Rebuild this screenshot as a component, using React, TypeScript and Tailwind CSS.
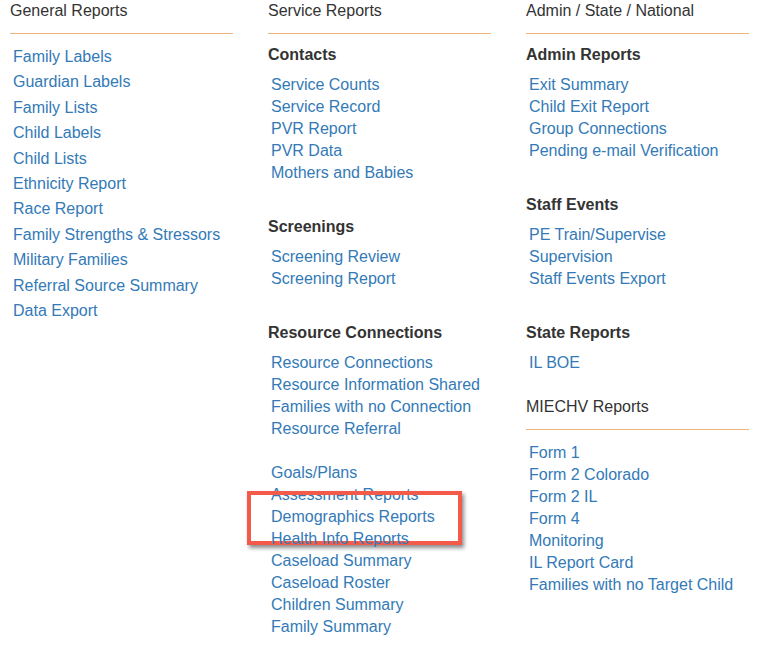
import type { ReactNode } from "react";

const GENERAL = [
  "Family Labels",
  "Guardian Labels",
  "Family Lists",
  "Child Labels",
  "Child Lists",
  "Ethnicity Report",
  "Race Report",
  "Family Strengths & Stressors",
  "Military Families",
  "Referral Source Summary",
  "Data Export",
];

const CONTACTS = ["Service Counts", "Service Record", "PVR Report", "PVR Data", "Mothers and Babies"];
const SCREENINGS = ["Screening Review", "Screening Report"];
const RESOURCES = [
  "Resource Connections",
  "Resource Information Shared",
  "Families with no Connection",
  "Resource Referral",
];
const OTHER = [
  "Goals/Plans",
  "Assessment Reports",
  "Demographics Reports",
  "Health Info Reports",
  "Caseload Summary",
  "Caseload Roster",
  "Children Summary",
  "Family Summary",
];

const ADMIN = ["Exit Summary", "Child Exit Report", "Group Connections", "Pending e-mail Verification"];
const STAFF = ["PE Train/Supervise", "Supervision", "Staff Events Export"];
const STATE = ["IL BOE"];
const MIECHV = [
  "Form 1",
  "Form 2 Colorado",
  "Form 2 IL",
  "Form 4",
  "Monitoring",
  "IL Report Card",
  "Families with no Target Child",
];

function Title({ children, className = "" }: { children: ReactNode; className?: string }) {
  return (
    <>
      <h2 className={`text-[16px] leading-[20px] text-[#333] ${className}`}>{children}</h2>
      <div className="mt-[12px] h-px bg-[#eeb47c]" />
    </>
  );
}

function SubHead({ children, className = "" }: { children: ReactNode; className?: string }) {
  return <h3 className={`text-[16px] font-semibold leading-[22px] text-[#333] ${className}`}>{children}</h3>;
}

function LinkList({ items, className = "", mark }: { items: string[]; className?: string; mark?: string }) {
  return (
    <ul className={`pl-[3px] ${className}`}>
      {items.map((s) => (
        <li key={s} className="relative text-[16px] leading-[22px] text-[#337ab7]">
          <a href="#">{s}</a>
          {mark === s && (
            <span className="absolute -left-[24px] -top-[15px] h-[54px] w-[215px] border-[4px] border-[#f45a4a] shadow-[2px_3px_4px_rgba(0,0,0,0.45)]" />
          )}
        </li>
      ))}
    </ul>
  );
}

export default function App() {
  return (
    <div className="flex min-h-[645px] gap-[35px] bg-white pl-[10px] pt-[1px] font-['Liberation_Sans',Arial,sans-serif]">
      <section className="w-[223px]">
        <Title>General Reports</Title>
        <ul className="mt-[10px] pl-[3px]">
          {GENERAL.map((s) => (
            <li key={s} className="text-[16px] leading-[25.4px] text-[#337ab7]">
              <a href="#">{s}</a>
            </li>
          ))}
        </ul>
      </section>

      <section className="w-[223px]">
        <Title>Service Reports</Title>
        <SubHead className="mt-[10px]">Contacts</SubHead>
        <LinkList items={CONTACTS} className="mt-[8px]" />
        <SubHead className="mt-[32px]">Screenings</SubHead>
        <LinkList items={SCREENINGS} className="mt-[8px]" />
        <SubHead className="mt-[32px]">Resource Connections</SubHead>
        <LinkList items={RESOURCES} className="mt-[8px]" />
        <LinkList items={OTHER} className="mt-[22px]" mark="Demographics Reports" />
      </section>

      <section className="w-[223px]">
        <Title>Admin / State / National</Title>
        <SubHead className="mt-[10px]">Admin Reports</SubHead>
        <LinkList items={ADMIN} className="mt-[8px]" />
        <SubHead className="mt-[32px]">Staff Events</SubHead>
        <LinkList items={STAFF} className="mt-[8px]" />
        <SubHead className="mt-[32px]">State Reports</SubHead>
        <LinkList items={STATE} className="mt-[8px]" />
        <Title className="mt-[23px]">MIECHV Reports</Title>
        <LinkList items={MIECHV} className="mt-[12px]" />
      </section>
    </div>
  );
}
